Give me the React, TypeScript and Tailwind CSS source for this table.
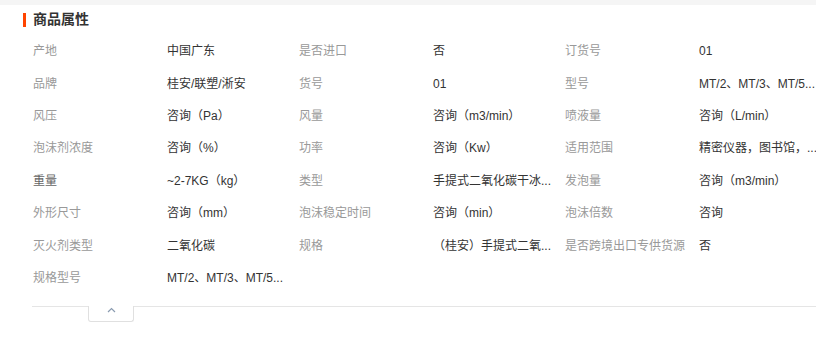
const ROWS: [string, string][][] = [
  [["产地", "中国广东"], ["是否进口", "否"], ["订货号", "01"]],
  [["品牌", "桂安/联塑/淅安"], ["货号", "01"], ["型号", "MT/2、MT/3、MT/5..."]],
  [["风压", "咨询（Pa）"], ["风量", "咨询（m3/min）"], ["喷液量", "咨询（L/min）"]],
  [["泡沫剂浓度", "咨询（%）"], ["功率", "咨询（Kw）"], ["适用范围", "精密仪器，图书馆，..."]],
  [["重量", "~2-7KG（kg）"], ["类型", "手提式二氧化碳干冰..."], ["发泡量", "咨询（m3/min）"]],
  [["外形尺寸", "咨询（mm）"], ["泡沫稳定时间", "咨询（min）"], ["泡沫倍数", "咨询"]],
  [["灭火剂类型", "二氧化碳"], ["规格", "（桂安）手提式二氧..."], ["是否跨境出口专供货源", "否"]],
  [["规格型号", "MT/2、MT/3、MT/5..."]],
];

export default function App() {
  return (
    <div
      className="w-[816px] h-[347px] overflow-hidden bg-white text-[12px]"
      style={{ fontFamily: '"Liberation Sans", "Noto Sans CJK SC", sans-serif' }}
    >
      <div className="h-[5px] bg-[#f5f5f5]" />

      {/* Title */}
      <div className="flex items-center h-[28px] pt-[1px] pl-[23px]">
        <span className="w-[3px] h-[14px] bg-[#ff4400]" />
        <h2 className="ml-[7px] text-[14px] font-bold text-[#333]">商品属性</h2>
      </div>

      {/* Attributes */}
      <div className="pl-[33px] pt-[2px] w-[900px]">
        {ROWS.map((row, i) => (
          <div key={i} className="flex h-[32.4px] items-center">
            {row.map(([label, value]) => (
              <div key={label} className="flex w-[266px]">
                <span className={`w-[134px] whitespace-nowrap ${label === "重量" ? "text-[#666]" : "text-[#999]"}`}>
                  {label}
                </span>
                <span className="w-[132px] whitespace-nowrap text-[#333]">{value}</span>
              </div>
            ))}
          </div>
        ))}
      </div>

      {/* Collapse bar */}
      <div className="relative ml-[32px] mt-[12px] border-t border-[#e5e5e5]">
        <button className="absolute left-[56px] top-[-1px] flex h-[16px] w-[46px] items-start justify-center rounded-b-[3px] border border-t-0 border-[#e0e0e0] bg-white pt-[1px] text-[#999]">
          <svg width="9" height="6" viewBox="0 0 9 6" fill="none" stroke="#8a9bb0" strokeWidth="1.2">
            <path d="M1 5L4.5 1.5L8 5" />
          </svg>
        </button>
      </div>
    </div>
  );
}
